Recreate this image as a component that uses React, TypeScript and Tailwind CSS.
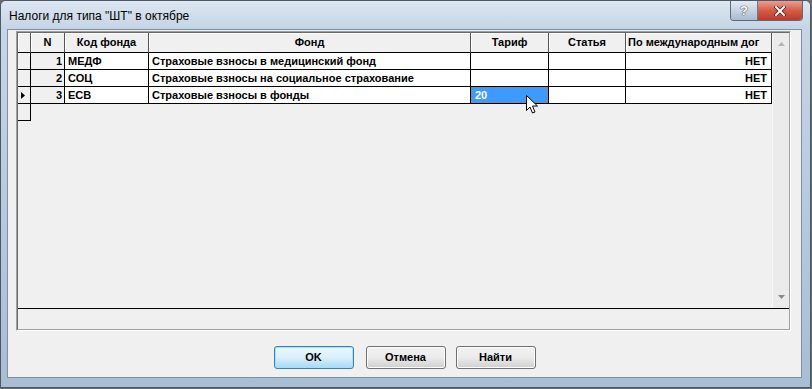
const font = { fontFamily: '"Liberation Sans", Arial, sans-serif' }

const rows = [
  { n: 1, code: 'МЕДФ', fund: 'Страховые взносы в медицинский фонд', tariff: '', intl: 'НЕТ' },
  { n: 2, code: 'СОЦ', fund: 'Страховые взносы на социальное страхование', tariff: '', intl: 'НЕТ' },
  { n: 3, code: 'ЕСВ', fund: 'Страховые взносы в фонды', tariff: '20', intl: 'НЕТ' },
]

const cols = 'grid grid-cols-[13px_34px_84px_322px_78px_77px_146px]'

function HeaderCell({ children }: { children?: React.ReactNode }) {
  return (
    <div className="flex h-[20px] items-center justify-center overflow-hidden whitespace-nowrap border-r border-b border-r-[#555] border-b-black bg-[#f0f0f0] text-[11px] font-bold text-black shadow-[inset_1px_1px_0_#fff]">
      {children}
    </div>
  )
}

function Button({ label, primary }: { label: string; primary?: boolean }) {
  return (
    <div
      className={
        primary
          ? 'flex h-[23px] w-[80px] items-center justify-center rounded-[3px] border border-[#3c7fb1] bg-gradient-to-b from-[#eaf6fd] via-[#d9f0fc] to-[#a7d9f5] text-[11px] font-bold text-black shadow-[inset_0_0_0_1px_#9fe3fb]'
          : 'flex h-[23px] w-[80px] items-center justify-center rounded-[3px] border border-[#707070] bg-gradient-to-b from-[#f2f2f2] via-[#ebebeb] to-[#cfcfcf] text-[11px] font-bold text-black shadow-[inset_0_0_0_1px_#fcfcfc]'
      }
    >
      {label}
    </div>
  )
}

export default function App() {
  return (
    <div style={font} className="h-[389px] w-[812px] bg-[#6b6b6b]">
      <div className="flex h-[388px] w-[811px] flex-col rounded-t-[6px] border border-[#4b5868] bg-gradient-to-b from-[#c9d8e8] to-[#a9bdd3]">
        {/* title bar */}
        <div className="flex h-[28px] items-start justify-between bg-gradient-to-b from-[#dde7f1] to-[#c5d4e4] rounded-t-[5px]">
          <div className="pl-[8px] pt-[8px] text-[12px] leading-[14px] text-black">Налоги для типа "ШТ" в октябре</div>
          <div className="mr-[7px] flex h-[20px] overflow-hidden rounded-b-[4px] border border-t-0 border-[#5a6b80]">
            <div className="flex w-[27px] items-center justify-center border-r border-[#6b7b8e] bg-gradient-to-b from-[#e3ebf3] via-[#c6d3e1] to-[#a9bbce] text-[13px] font-bold text-white [text-shadow:0_0_1px_#333,0_0_1px_#333]">
              ?
            </div>
            <div className="flex w-[44px] items-center justify-center bg-gradient-to-b from-[#e8a091] via-[#d45b46] to-[#c0392b]">
              <svg width="12" height="10" viewBox="0 0 12 10">
                <path d="M2 1 L10 9 M10 1 L2 9" stroke="#3a1a14" strokeWidth="3.4" strokeLinecap="square" />
                <path d="M2 1 L10 9 M10 1 L2 9" stroke="#fff" strokeWidth="2" strokeLinecap="square" />
              </svg>
            </div>
          </div>
        </div>

        {/* client area */}
        <div className="flex flex-1 flex-col pl-[6px] pr-[8px] pb-[9px]">
          <div className="flex flex-1 flex-col border border-[#7e90a6] bg-[#f0f0f0] pl-[8px] pt-[1px]">
            <div className="h-[300px] w-[775px] border border-t-[#a0a0a0] border-l-[#a0a0a0] border-b-white border-r-white">
              <div className="flex h-full flex-col border border-t-[#696969] border-l-[#696969] border-b-[#a0a0a0] border-r-[#a0a0a0]">
                <div className="flex h-[275px]">
                  <div className="w-[754px]">
                    <div className={cols}>
                      <HeaderCell />
                      <HeaderCell>N</HeaderCell>
                      <HeaderCell>Код фонда</HeaderCell>
                      <HeaderCell>Фонд</HeaderCell>
                      <HeaderCell>Тариф</HeaderCell>
                      <HeaderCell>Статья</HeaderCell>
                      <div className="flex h-[20px] items-center overflow-hidden whitespace-nowrap border-r border-b border-r-[#555] border-b-black bg-[#f0f0f0] pl-[2px] text-[11px] font-bold text-black shadow-[inset_1px_1px_0_#fff]">
                        По международным дог
                      </div>
                    </div>
                    {rows.map((r) => (
                      <div key={r.n} className={`${cols} h-[17px] text-[11px] font-bold leading-[16px] text-black`}>
                        <div className="flex items-center border-r border-b border-black bg-[#f0f0f0] pl-[3px]">
                          {r.n === 3 && (
                            <svg width="4" height="7" viewBox="0 0 4 7">
                              <path d="M0 0 L4 3.5 L0 7 Z" fill="#000" />
                            </svg>
                          )}
                        </div>
                        <div className="border-r border-b border-black bg-[#f0f0f0] pr-[2px] text-right">{r.n}</div>
                        <div className="border-r border-b border-black bg-white pl-[3px]">{r.code}</div>
                        <div className="overflow-hidden whitespace-nowrap border-r border-b border-black bg-white pl-[3px]">{r.fund}</div>
                        {r.tariff ? (
                          <div className="relative border-r border-b border-black bg-white">
                            <div className="h-full border border-dotted border-[#c87533] bg-[#3d9bff] pl-[3px] leading-[14px] text-white">
                              {r.tariff}
                            </div>
                            <svg className="absolute left-[55px] top-[8px]" width="13" height="20" viewBox="0 0 13 20">
                              <path
                                d="M0.5 0.5 L0.5 15.5 L4 12 L6.5 18 L9 17 L6.5 11 L11.5 11 Z"
                                fill="#fff"
                                stroke="#000"
                                strokeWidth="1"
                                strokeLinejoin="miter"
                              />
                            </svg>
                          </div>
                        ) : (
                          <div className="border-r border-b border-black bg-white" />
                        )}
                        <div className="border-r border-b border-black bg-white" />
                        <div className="border-r border-b border-black bg-white pr-[4px] text-right">{r.intl}</div>
                      </div>
                    ))}
                    <div className="h-[17px] w-[13px] border-r border-b border-black bg-[#f0f0f0]" />
                  </div>
                  {/* scrollbar */}
                  <div className="flex w-[17px] flex-col items-center justify-between border-l border-[#f8f8f8] bg-[#ebebeb] py-[9px]">
                    <svg width="7" height="4" viewBox="0 0 7 4">
                      <path d="M0 4 L3.5 0 L7 4 Z" fill="#b4b4b4" />
                    </svg>
                    <svg width="7" height="4" viewBox="0 0 7 4">
                      <path d="M0 0 L7 0 L3.5 4 Z" fill="#8a8a8a" />
                    </svg>
                  </div>
                </div>
                <div className="flex-1 border-t border-black bg-[#f0f0f0]" />
              </div>
            </div>

            <div className="flex flex-1 items-start justify-center pt-[15px] pr-[8px]">
              <Button label="OK" primary />
              <div className="ml-[12px]">
                <Button label="Отмена" />
              </div>
              <div className="ml-[10px]">
                <Button label="Найти" />
              </div>
            </div>
          </div>
        </div>
      </div>
    </div>
  )
}
